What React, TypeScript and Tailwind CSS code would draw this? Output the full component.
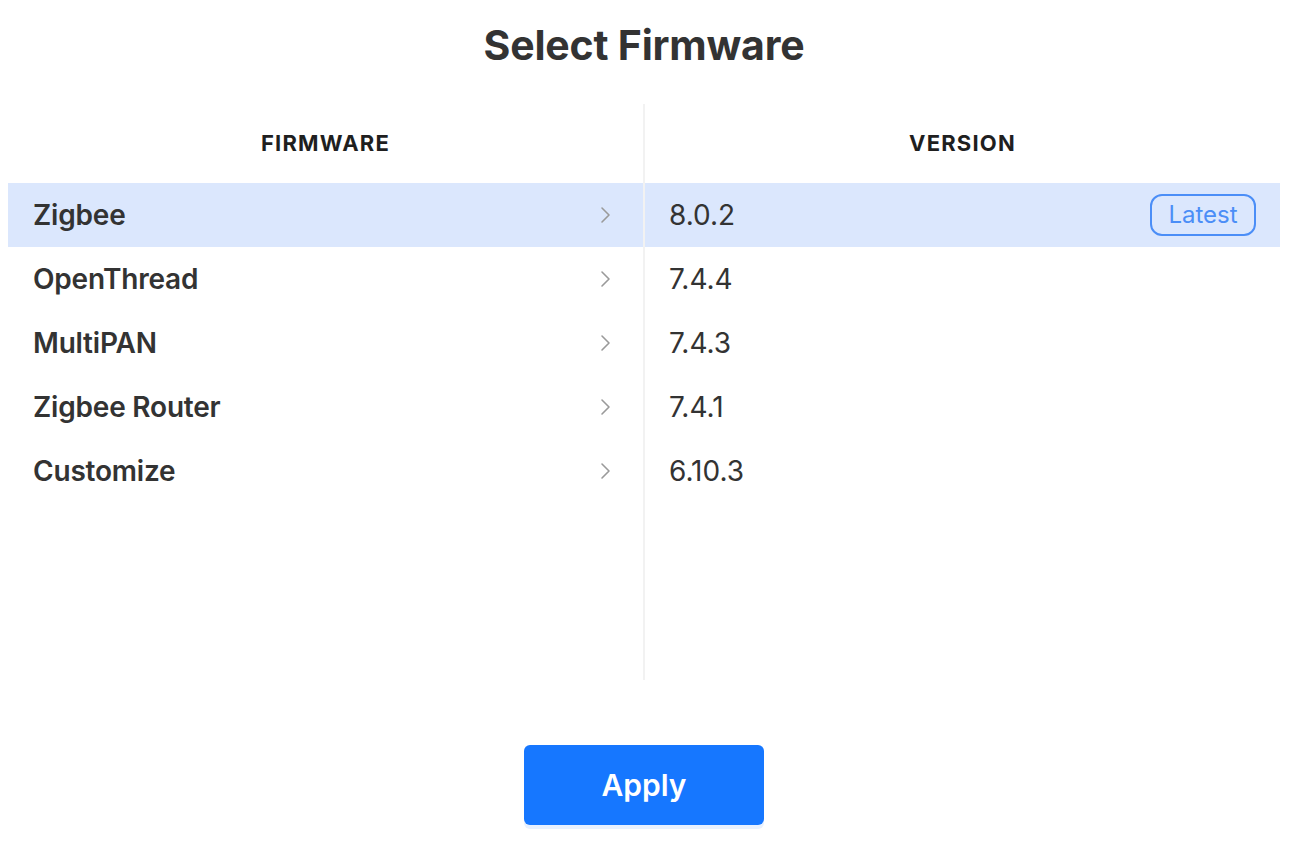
const rows = [
  { name: "Zigbee", version: "8.0.2", latest: true },
  { name: "OpenThread", version: "7.4.4" },
  { name: "MultiPAN", version: "7.4.3" },
  { name: "Zigbee Router", version: "7.4.1" },
  { name: "Customize", version: "6.10.3" },
];

function Chevron() {
  return (
    <svg width="14" height="18" viewBox="0 0 14 18" fill="none" className="text-[#9a9a9a]">
      <polyline
        points="3,2 10,9 3,16"
        stroke="currentColor"
        strokeWidth="1.6"
        strokeLinecap="round"
        strokeLinejoin="round"
      />
    </svg>
  );
}

export default function App() {
  const selected = 0;

  return (
    <div
      className="min-h-screen bg-white text-[#333333] pl-2 pr-[9px]"
      style={{ fontFamily: "Inter, 'Noto Sans', sans-serif" }}
    >
      <h1 className="h-[104px] flex items-center justify-center pb-3 text-[41px] font-bold tracking-[-0.2px] text-[#333333]">
        Select Firmware
      </h1>

      <div className="flex h-[576px]">
        {/* Firmware column */}
        <div className="flex-1 border-r-2 border-[#f2f2f2]">
          <div className="h-[79px] flex items-center justify-center text-[22px] font-bold tracking-[1.2px] text-[#1f1f1f]">
            FIRMWARE
          </div>
          {rows.map((r, i) => (
            <div
              key={r.name}
              className={
                i === selected
                  ? "h-16 flex items-center justify-between pl-[25px] pr-[30px] bg-[#dbe7fd]"
                  : "h-16 flex items-center justify-between pl-[25px] pr-[30px]"
              }
            >
              <span className="text-[28px] font-semibold tracking-[-0.2px]">{r.name}</span>
              <Chevron />
            </div>
          ))}
        </div>

        {/* Version column */}
        <div className="flex-1">
          <div className="h-[79px] flex items-center justify-center text-[22px] font-bold tracking-[1.2px] text-[#1f1f1f]">
            VERSION
          </div>
          {rows.map((r, i) => (
            <div
              key={r.version}
              className={
                i === selected
                  ? "h-16 flex items-center justify-between pl-6 pr-6 bg-[#dbe7fd]"
                  : "h-16 flex items-center justify-between pl-6 pr-6"
              }
            >
              <span className="text-[28px]">{r.version}</span>
              {r.latest && (
                <span className="h-[42px] w-[106px] flex items-center justify-center rounded-xl border-2 border-[#4b8ef7] text-[24px] text-[#4b8ef7]">
                  Latest
                </span>
              )}
            </div>
          ))}
        </div>
      </div>

      <div className="flex justify-center pt-[65px]">
        <button className="h-20 w-60 rounded-md bg-[#1677ff] text-[30px] font-semibold text-white shadow-[0_4px_0_#e8f1ff]">
          Apply
        </button>
      </div>
    </div>
  );
}
